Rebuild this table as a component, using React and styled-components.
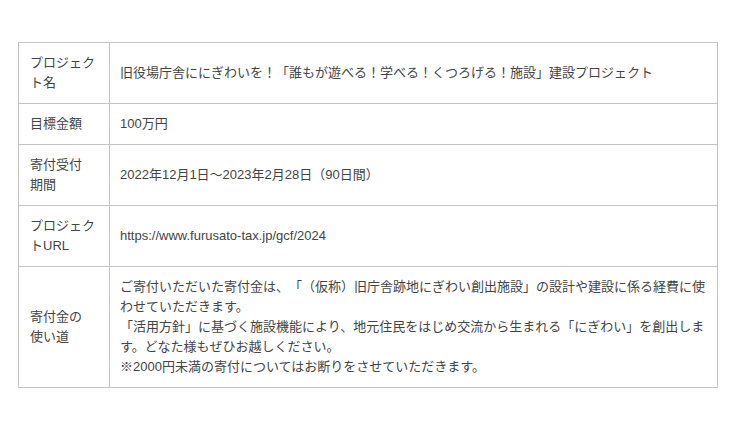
import styled, { createGlobalStyle } from "styled-components"

const GlobalStyle = createGlobalStyle`
  html, body {
    margin: 0;
    padding: 0;
    background: #fff;
  }
  body {
    font-family: "Liberation Sans", "Noto Sans CJK JP", sans-serif;
    color: #444;
  }
`

const Page = styled.div`
  width: 740px;
  height: 428px;
  box-sizing: border-box;
  padding: 42px 0 0 18px;
`

const Table = styled.table`
  width: 700px;
  border-collapse: collapse;
  table-layout: fixed;
  font-size: 13px;
  line-height: 20px;
  text-spacing-trim: space-all;
`

const HeadCell = styled.th`
  width: 91px;
  box-sizing: border-box;
  padding: 10px 10px 10px 11px;
  border: 1px solid #c4c4c4;
  text-align: left;
  vertical-align: middle;
  font-weight: normal;
  color: #444;
`

const DataCell = styled.td`
  padding: 10px;
  border: 1px solid #c4c4c4;
  vertical-align: middle;
  color: #444;
`

const rows = [
  {
    label: ["プロジェクト名"],
    value: ["旧役場庁舎ににぎわいを！「誰もが遊べる！学べる！くつろげる！施設」建設プロジェクト"],
  },
  { label: ["目標金額"], value: ["100万円"] },
  { label: ["寄付受付", "期間"], value: ["2022年12月1日～2023年2月28日（90日間）"] },
  { label: ["プロジェクトURL"], value: ["https://www.furusato-tax.jp/gcf/2024"] },
  {
    label: ["寄付金の", "使い道"],
    value: [
      "ご寄付いただいた寄付金は、「（仮称）旧庁舎跡地にぎわい創出施設」の設計や建設に係る経費に使わせていただきます。",
      "「活用方針」に基づく施設機能により、地元住民をはじめ交流から生まれる「にぎわい」を創出します。どなた様もぜひお越しください。",
      "※2000円未満の寄付についてはお断りをさせていただきます。",
    ],
  },
]

function Lines({ items }) {
  return items.map((line, i) => (
    <span key={i}>
      {line}
      {i < items.length - 1 && <br />}
    </span>
  ))
}

export default function App() {
  return (
    <>
      <GlobalStyle />
      <Page>
        <Table>
          <tbody>
            {rows.map((row) => (
              <tr key={row.label.join("")}>
                <HeadCell>
                  <Lines items={row.label} />
                </HeadCell>
                <DataCell>
                  <Lines items={row.value} />
                </DataCell>
              </tr>
            ))}
          </tbody>
        </Table>
      </Page>
    </>
  )
}
